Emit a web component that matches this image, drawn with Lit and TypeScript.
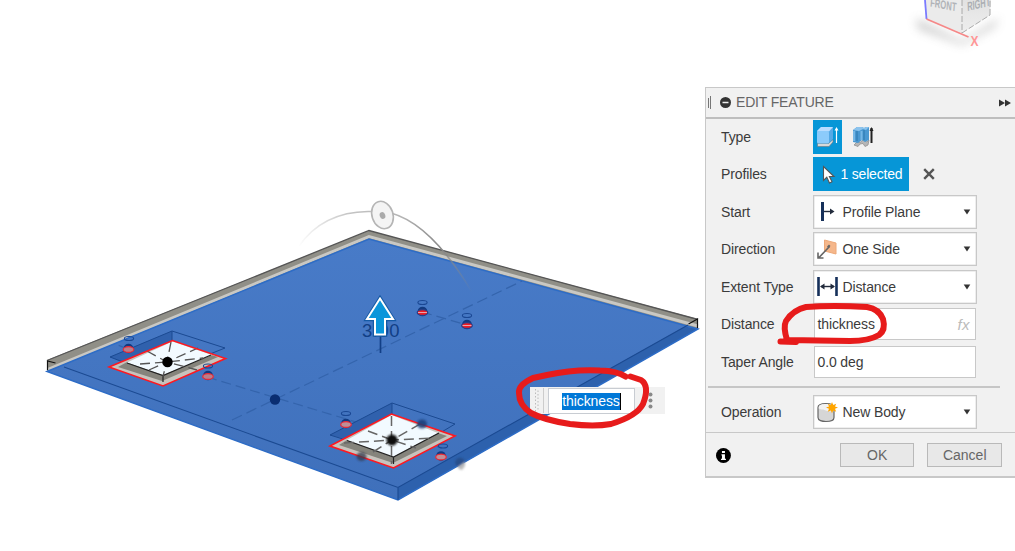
import { LitElement, html, svg, css } from "lit";
import { customElement, property } from "lit/decorators.js";

const icons: Record<string, unknown> = {
  plane: svg`<path d="M5.500 3v19" stroke="#16305a" stroke-width="3"/><path d="M7 12.500h8" stroke="#222b3c" stroke-width="1.400"/><path d="M13 9.500l4.500 3-4.500 3z" fill="#222b3c"/>`,
  side: svg`<path d="M7.500 3l11.500 3v11L7.500 14z" fill="#f5b78b" stroke="#eda878"/><path d="M12.500 9.500L2 20.500M1 15.500v5.500h5.500" fill="none" stroke="#666" stroke-width="1.600"/><path d="M12 7.500l1.500 1.500-2 2-1.500-1.500z" fill="#666"/>`,
  distance: svg`<path d="M1.500 3v19M19.500 3v19" stroke="#16305a" stroke-width="2.600"/><path d="M4 12.500h13" stroke="#222b3c" stroke-width="1.400"/><path d="M7.500 9.500l-4.500 3 4.500 3zM13.500 9.500l4.500 3-4.500 3z" fill="#222b3c"/>`,
  body: svg`<path d="M1 8.500C1 5 5 4.500 9 4.500s8 .5 8 4v10c0 3-4 4-8 4s-8-1-8-4z" fill="#d6d6d6" stroke="#666" stroke-width="1.200"/><path d="M1.700 8.500c0-3 4-3.500 7.300-3.500S16.300 5.500 16.300 8.500v4c-5 0-8-1-10-2-2 0-4-.5-4.600-1z" fill="#f3f3f3"/><path d="M15 3l1.200 3 3-1.300L18 7.600l3 1-3 1.100 1.200 3-3-1.300L15 14.300l-1.200-2.900-3 1.300 1.200-3-3-1.100 3-1-1.200-2.900 3 1.300z" fill="#ffa500"/>`,
};

@customElement("feature-select")
export class FeatureSelect extends LitElement {
  @property() icon = "plane";
  @property() value = "";
  static styles = css`
    :host { box-sizing: border-box; display: flex; align-items: center; width: 164px; height: 34px; border: 1px solid #c8c8c8; box-shadow: inset 0 0 0 .5px #ddd; background: #fff; padding: 0 5px 0 3px; }
    .icon { width: 22px; height: 25px; margin-right: 3.500px; }
    .value { flex: 1; white-space: nowrap; }
    .arrow { width: 8px; height: 6px; }
  `;
  render() {
    return html`<svg class="icon" viewBox="0 0 22 25">${icons[this.icon]}</svg><span class="value">${this.value}</span>
      <svg class="arrow" viewBox="0 0 8 6"><path d="M.7.5h6.600L4 5.500z" fill="#333"/></svg>`;
  }
}

@customElement("feature-panel")
export class FeaturePanel extends LitElement {
  static styles = css`
    :host { box-sizing: border-box; display: flex; flex-direction: column; width: 310px; height: 391px; border: 1px solid #c8c8c8; border-right: 0; border-bottom-width: 2px; background: #f1f1f1; color: #3b3b3b; font: 14px "Liberation Sans", Arial, sans-serif; letter-spacing: -.12px; }
    header { box-sizing: border-box; display: flex; align-items: center; height: 31px; border-bottom: 2px solid #bebebe; color: #666; padding: 0 4px 0 2px; }
    .grip { width: 12px; height: 15px; }
    .minus { width: 11px; height: 11px; margin-right: 5px; }
    .title { flex: 1; letter-spacing: -.18px; }
    .more { width: 12px; height: 8px; margin-top: 2px; }
    .rows { display: flex; flex-direction: column; padding-top: 1px; gap: 3.500px; height: 268px; box-sizing: border-box; }
    .row { display: flex; height: 34px; align-items: center; padding-left: 15px; flex: none; }
    .label { width: 92px; flex: none; white-space: nowrap; }
    .type { width: 29px; height: 34px; background: #0696d7; }
    .alt { width: 26px; height: 34px; margin-left: 9px; }
    .chip { box-sizing: border-box; display: flex; align-items: center; width: 96px; height: 34px; background: #0696d7; color: #fff; padding-left: 9px; white-space: nowrap; letter-spacing: -.2px; }
    .chip svg { width: 14px; height: 20px; margin-right: 4.500px; }
    .clear { width: 12px; height: 12px; margin-left: 14px; }
    .input { box-sizing: border-box; display: flex; justify-content: space-between; align-items: center; width: 162px; height: 32px; margin-left: 1px; border: 1px solid #c8c8c8; background: #fff; padding: 0 5px 0 2.500px; }
    .fx { color: #bbb; font-style: italic; font-size: 15px; letter-spacing: .4px; }
    .operation { box-sizing: border-box; border-top: 2px solid #c6c6c6; width: 292px; height: 46px; margin-left: 2px; padding-top: 5px; }
    .operation .row { padding-left: 13px; height: 37px; }
    footer { box-sizing: border-box; display: flex; align-items: center; height: 44px; border-top: 1px solid #c8c8c8; padding-left: 10px; }
    .info { width: 15px; height: 15px; margin-right: 109px; margin-top: 2px; }
    .button { box-sizing: border-box; display: flex; justify-content: center; align-items: center; width: 75px; height: 24px; border: 1px solid #b9b9b9; background: #e8e8e8; color: #666; margin-right: 13px; letter-spacing: 0; }
  `;
  render() {
    return html`
      <header>
        <svg class="grip" viewBox="0 0 12 15"><path d="M.5 3v10M2.500 1v13" stroke="#777"/></svg>
        <svg class="minus" viewBox="0 0 11 11"><circle cx="5.500" cy="5.500" r="5.500" fill="#333"/><path d="M2.500 5.500h6" stroke="#eee" stroke-width="1.500"/></svg>
        <span class="title">EDIT FEATURE</span>
        <svg class="more" viewBox="0 0 12 8"><path d="M0 .5L6 4v-3.500L12 4 6 7.500V4L0 7.500z" fill="#333"/></svg>
      </header>
      <div class="rows">
        <div class="row"><span class="label">Type</span>
          <svg class="type" viewBox="0 0 29 34"><path d="M4.500 23.500h11l4.500-4v2.500l-4 4.500H4.500z" fill="#d8d8d8" stroke="#69777d" stroke-width=".6"/><path d="M4 11l4-4h12v12l-4 4H5z" fill="#55a9e6"/><path d="M4 11l4-4h12l-4 4.500H4z" fill="#b9ddff"/><rect x="4" y="11" width="12" height="12.500" rx="1.500" fill="#8ccbfb"/><path d="M23.500 9v14" stroke="#fff" stroke-width="1.200"/><path d="M21.500 10.500l2-3.500 2 3.500z" fill="#fff"/></svg>
          <svg class="alt" viewBox="0 0 26 34"><path d="M3 25l3-3 3 .5 3-2.500 4 2 2-2-1 5-3 1.500-2-3-3 .5-2 2.500z" fill="#b6b6b6" stroke="#909090" stroke-width=".8"/><path d="M2 10l4-3h5l2 1 2-1h3v13l-4 2-3-2-4 3-5-1z" fill="#4a98d1"/><path d="M2 10l4-3h5l2 1 2-1h3l-3 3-3-1-4 2z" fill="#8bc3ed"/><path d="M3 11v10M10.500 11v9" stroke="#76b7e6" stroke-width="2"/><path d="M6 11v10M13 10v10" stroke="#2a76ad" stroke-width="1"/><path d="M20.500 8v15" stroke="#222" stroke-width="2"/><path d="M18.500 11l2-4 2 4z" fill="#222"/></svg>
        </div>
        <div class="row"><span class="label">Profiles</span>
          <div class="chip"><svg viewBox="0 0 14 20"><path d="M1.500 2.500v14l3.300-3.200 2.700 5.700 2.500-1.200-2.600-5.300h4.600z" fill="#fff" stroke="#555" stroke-width="1.100"/></svg><span>1 selected</span></div>
          <svg class="clear" viewBox="0 0 12 12"><path d="M1.200 1.200l9.600 9.600M10.800 1.200L1.200 10.800" stroke="#555" stroke-width="2.400"/></svg>
        </div>
        <div class="row"><span class="label">Start</span><feature-select icon="plane" value="Profile Plane"></feature-select></div>
        <div class="row"><span class="label">Direction</span><feature-select icon="side" value="One Side"></feature-select></div>
        <div class="row"><span class="label">Extent Type</span><feature-select icon="distance" value="Distance"></feature-select></div>
        <div class="row"><span class="label">Distance</span><div class="input"><span>thickness</span><span class="fx">fx</span></div></div>
        <div class="row"><span class="label">Taper Angle</span><div class="input">0.0 deg</div></div>
      </div>
      <div class="operation"><div class="row"><span class="label">Operation</span><feature-select icon="body" value="New Body"></feature-select></div></div>
      <footer>
        <svg class="info" viewBox="0 0 15 15"><circle cx="7.500" cy="7.500" r="7.500" fill="#000"/><path d="M6 3h3v2H6zM5.500 6.200H9v4.600h1V12H5v-1.200h1V7.500h-.5z" fill="#fff"/></svg>
        <div class="button">OK</div><div class="button">Cancel</div>
      </footer>`;
  }
}

@customElement("model-canvas")
export class ModelCanvas extends LitElement {
  static styles = css`
    :host, svg { display: block; width: 1015px; height: 551px; }
    text { font-family: "Liberation Sans", Arial, sans-serif; }
  `;

  /** A sketch point marker with a small ring near it. */
  private pin(x: number, y: number, ringX: number, ringY: number, fill: string, stroke: string) {
    return svg`<ellipse cx=${ringX} cy=${ringY} rx="4.600" ry="2" fill="none" stroke="#1a4793" stroke-width="1.100"/>
      <circle cx=${x} cy=${y - 1} r="4.800" fill="#123a80"/>
      <ellipse cx=${x} cy=${y} rx="5.300" ry="2.900" fill=${fill} stroke=${stroke} stroke-width="1.200"/>`;
  }

  render() {
    return html`<svg viewBox="0 0 1015 551">
      <defs>
        <linearGradient id="top" x1="0" y1="0" x2="0" y2="1"><stop offset="0" stop-color="#487bc8"/><stop offset="1" stop-color="#3f70bb"/></linearGradient>
        <linearGradient id="arc" gradientUnits="userSpaceOnUse" x1="298" y1="0" x2="472" y2="0"><stop offset="0" stop-color="#bbb" stop-opacity="0"/><stop offset=".3" stop-color="#c4c4c4"/><stop offset=".6" stop-color="#b4b4b4"/><stop offset=".82" stop-color="#888"/><stop offset="1" stop-color="#888" stop-opacity="0"/></linearGradient>
        <linearGradient id="cube" x1="0" y1="0" x2="0" y2="1"><stop offset="0" stop-color="#e2e2e2"/><stop offset="1" stop-color="#eee"/></linearGradient>
        <filter id="soft" x="-30%" y="-50%" width="160%" height="200%"><feGaussianBlur stdDeviation="5"/></filter>
        <filter id="haze"><feGaussianBlur stdDeviation=".8"/></filter>
      </defs>

      <path d="M916 18l46 23 37-23-4 9-33 18-44-16z" fill="#999" opacity=".45" filter="url(#soft)"/>
      <path d="M925 0h37v33l-36-14z" fill="#ebebeb"/><path d="M962 0h29l-1 15-28 18z" fill="url(#cube)"/>
      <path d="M962 0v33M962 33l28-18M990 15V0" fill="none" stroke="#999" stroke-dasharray="6 2" stroke-width=".8"/>
      <path d="M925 0l1.500 19" stroke="#7a7aff" stroke-width="1.800"/><path d="M926.500 19l42 18" stroke="#f58888" stroke-width="1.800"/>
      <text transform="matrix(.93 .17 -.08 1 930 6.500)" font-size="12" font-weight="bold" textLength="28" lengthAdjust="spacingAndGlyphs" fill="#b0b3b7">FRONT</text>
      <text transform="matrix(.88 -.2 .05 1 967.500 11)" font-size="12.500" font-weight="bold" textLength="26" lengthAdjust="spacingAndGlyphs" fill="#aaaeb2">RIGHT</text>
      <text x="970.500" y="45.500" font-size="15" font-weight="bold" fill="#ff9696" textLength="8" lengthAdjust="spacingAndGlyphs">X</text>

      <path d="M47 360L369 230.500L698 319v11L369 239L47 372z" fill="#908f87"/>
      <path d="M48 369.500L369 236.500L698 326" fill="none" stroke="#c9c8c3" stroke-width="3"/>
      <path d="M47 360.500L369 230.500L698 319.500" fill="none" stroke="#555" stroke-width="1.300"/>
      <path d="M47.500 370v-9l8 2M697.500 329v-10l-9 5" fill="none" stroke="#111" stroke-width="1.200"/>
      <path d="M47 371.500L369 239L698 329L398 500z" fill="url(#top)"/>
      <path d="M398 487.500L685 326.500L698 329L398 500z" fill="#2d61ad"/>
      <path d="M47 371.500L369 239L698 329L398 500z" fill="none" stroke="#2d6cc6" stroke-width="1.500"/>
      <path d="M64 367L398 487.500L688 325M398 487.500V500" fill="none" stroke="#1b4a92" stroke-width="1.100"/>
      <path d="M232 420L522 281" fill="none" stroke="#3464ac" stroke-width="1.200" stroke-dasharray="11 5"/>
      <path d="M207 377L442 448M422 312l45 13M128 349l-13-5" fill="none" stroke="#3464ac" stroke-width="1.200" stroke-dasharray="10 5"/>

      <path d="M110 357L172 331V341L123 362z" fill="#3061ad"/>
      <path d="M123 362L110 357L172 331L225 348L210 354M172 331v12" fill="none" stroke="#1b4a92"/>
      ${this.pin(128.500, 349.500, 129, 338.500, "#b87e8b", "#ef2733")}
      <path d="M109 367L172.500 340.500L225.500 358.500L163 386z" fill="#c7c3bd"/>
      <path d="M118 367L127 362L163 375L211 355L218 357L162 381z" fill="#85847c"/>
      <path d="M127 362.500L172.500 341.500L212 355L163 375z" fill="#f2faff"/>
      <path d="M127 363L163 375.500L211 355M163 376v6" fill="none" stroke="#222" stroke-width="1.200"/>
      <path d="M171 342l-4 20-4 14M147 351l20 11 30 8M140 364l27-2 36-4M149 370l18-8 31-14" fill="none" stroke="#555" stroke-width="1.300" stroke-dasharray="10 5"/>
      <path d="M109 367L172.500 340.500L225.500 358.500L163 386z" fill="none" stroke="#ff1820" stroke-width="1.600"/>
      <circle cx="167.500" cy="362" r="5.200" fill="#000"/>

      <path d="M330 435L392 403V414L346 439z" fill="#3061ad"/>
      <path d="M346 440L330 435L392 403L455 424L440 433M392 403v12" fill="none" stroke="#1b4a92"/>
      <path d="M330 446L391.500 414L455 436L393.500 468z" fill="#c7c3bd"/>
      <path d="M339 445L347 440L393 457L438 433L447 436L393 463z" fill="#85847c"/>
      <path d="M347 440L391.500 415L438 433L393 457z" fill="#f2faff"/>
      <path d="M347 440.500L393.500 457L439 433M393.500 457v7" fill="none" stroke="#222" stroke-width="1.200"/>
      <path d="M391.500 416v48M368 431l24 9 24 8M344 443l48-3 40-2M373 452l19-12 30-17" fill="none" stroke="#666" stroke-width="1.500" stroke-dasharray="10 5"/>
      <path d="M330 446L391.500 414L455 436L393.500 468z" fill="none" stroke="#ff1820" stroke-width="1.600"/>
      <g filter="url(#haze)"><circle cx="392" cy="440" r="5.500" fill="#111"/><ellipse cx="422" cy="424" rx="5" ry="4.500" fill="#173c76" opacity=".85"/><ellipse cx="361.500" cy="456.500" rx="5" ry="4.500" fill="#333b4c" opacity=".75"/><circle cx="460" cy="462.500" r="4.800" fill="#244b85" opacity=".8"/><path d="M458 467l7-5v4l-3 4-3-1z" fill="#bbb"/></g>

      ${this.pin(208, 376.500, 208, 366, "#b87e8b", "#ef2733")}
      ${this.pin(346, 424.500, 346, 413.500, "#bf8f98", "#ef2733")}
      ${this.pin(441, 457, 443, 446, "#bf8f98", "#ef2733")}
      ${this.pin(422.500, 312.500, 422.500, 302.500, "#ef1d26", "#23408c")}
      ${this.pin(467, 325.500, 467, 315.500, "#ef1d26", "#23408c")}
      <path d="M418 312.500h9M462.500 325.500h9" stroke="#e6a4ae"/>
      <circle cx="275" cy="399.500" r="5.200" fill="#0a2e72"/>

      <path d="M299 246Q323 212 368 211.500H383Q427 217 472 292" fill="none" stroke="url(#arc)" stroke-width="1.600"/>
      <ellipse cx="382.500" cy="215" rx="10.500" ry="14" transform="rotate(-18 382.500 215)" fill="#f4f4f4" stroke="#b5b5b5" stroke-width="1.600"/>
      <ellipse cx="382.500" cy="215.500" rx="2.800" ry="3.500" transform="rotate(-18 382.500 215.500)" fill="#aaa"/>

      <text x="362" y="337" font-size="18.500" fill="#123f86" textLength="37.500">3.00</text>
      <path d="M380.500 334v19" stroke="#123f86" stroke-width="1.700"/>
      <path d="M380 298l13.500 21.500h-8v15.500h-11v-15.500h-8z" fill="#0b96da" stroke="#155aa5" stroke-width="3.500"/>
      <path d="M380 298.500l13 20.500h-8v15.500h-10v-15.500h-8z" fill="#0b96da" stroke="#fff" stroke-width="2"/>
    </svg>`;
  }
}

@customElement("app-root")
export class AppRoot extends LitElement {
  static styles = css`
    :host { display: block; position: relative; width: 1015px; height: 551px; overflow: hidden; background: #fff; font: 14px "Liberation Sans", Arial, sans-serif; }
    feature-panel { position: absolute; left: 705px; top: 87px; }
    .value-box { position: absolute; left: 530px; top: 387px; display: flex; width: 135px; height: 27px; background: #f1f1f1; }
    .handle { width: 18px; height: 27px; }
    .field { box-sizing: border-box; display: flex; align-items: center; justify-content: center; width: 87px; height: 26px; margin-top: 1px; border: 1px solid #c8ccd2; background: #fff; }
    .selected { background: #0078d7; color: #fff; border-right: 1px solid #000; line-height: 17px; letter-spacing: -.1px; }
    .dots { width: 30px; height: 27px; }
    .markup { position: absolute; left: 0; top: 0; width: 1015px; height: 551px; pointer-events: none; }
  `;
  render() {
    return html`
      <model-canvas></model-canvas>
      <feature-panel></feature-panel>
      <div class="value-box">
        <svg class="handle" viewBox="0 0 18 27"><path d="M5.500 2v23M8 3.500v21" stroke="#bbb" stroke-dasharray="1.500 2"/><path d="M13.500 1v25" stroke="#ccc"/></svg>
        <div class="field"><span class="selected">thickness</span></div>
        <svg class="dots" viewBox="0 0 30 27"><g fill="#888"><circle cx="15.500" cy="7.500" r="2"/><circle cx="15.500" cy="13.500" r="2"/><circle cx="15.500" cy="19.500" r="2"/></g></svg>
      </div>
      <svg class="markup" viewBox="0 0 1015 551" fill="none" stroke="#e71b1b" stroke-linecap="round" stroke-linejoin="round" stroke-width="6">
        <path d="M625.500 376.500Q617 371 600 370.500Q574 369 547 375L533 378Q518 385 519 393Q519 405 531 413Q544 420 570 424Q594 427 611 424Q637 416 643 404Q650 386 641 380L630.500 376.500"/>
        <path d="M780.500 341.500L796 342M787 340Q783 327 786 321Q793 310 806 307Q833 305 867 307Q879 309 883 319Q886 330 879 335Q869 341 850 341L787 340"/>
      </svg>`;
  }
}
